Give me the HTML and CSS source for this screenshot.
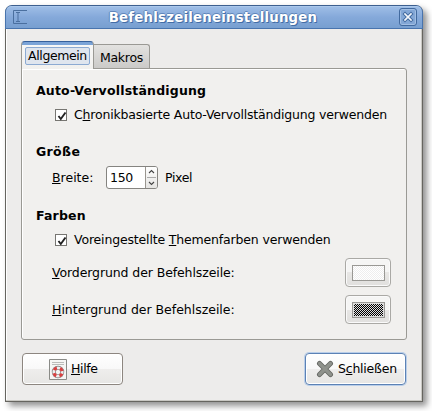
FILE: index.html
```html
<!DOCTYPE html>
<html lang="de">
<head>
<meta charset="utf-8">
<title>Befehlszeileneinstellungen</title>
<link rel="stylesheet" href="styles.css">
</head>
<body>
<div class="window">
  <header class="titlebar">
    <svg class="app-icon" width="14" height="14" viewBox="0 0 14 14" fill="none" stroke="#4a6f9f"><path d="M14 .5H.5v13H14M3 2.500h4M5 3v8M3 11.500h4"/></svg>
    <h1 class="title">Befehlszeileneinstellungen</h1>
    <button class="close" aria-label="Schließen"><svg width="16" height="16" viewBox="0 0 16 16" fill="none"><path d="M5 5l6 6M11 5l-6 6" stroke="#426a9f" stroke-width="3.600" stroke-linecap="square"/><path d="M5 5l6 6M11 5l-6 6" stroke="#f3f7fc" stroke-width="1.700" stroke-linecap="square"/></svg></button>
  </header>
  <nav class="tabs">
    <button class="tab active"><span class="focus">Allgemein</span></button>
    <button class="tab inactive"><span class="makros">Makros</span></button>
  </nav>
  <main class="panel">
    <h2 class="auto">Auto-Vervollständigung</h2>
    <div class="row check"><span class="box"><svg width="12" height="12" viewBox="0 0 12 12"><path d="M2.500 6l2.300 3L9.500 2.500" fill="none" stroke="#222" stroke-width="1.900"/></svg></span><span class="t-chronik">C<u>h</u>ronikbasierte Auto-Vervollständigung verwenden</span></div>
    <h2 class="size">Größe</h2>
    <div class="row width"><span class="label">Breite:</span><span class="spin"><span class="value">150</span><span class="steps"><svg width="11" height="22" viewBox="0 0 11 22" fill="none" stroke="#444"><path d="M3 6L5.500 3.500 8 6M3 15l2.500 2.500L8 15" stroke-width="1.100"/><path d="M1 10.500h9" stroke="#aaa"/></svg></span></span><span class="t-pixel">Pixel</span></div>
    <h2 class="colors">Farben</h2>
    <div class="row check"><span class="box"><svg width="12" height="12" viewBox="0 0 12 12"><path d="M2.500 6l2.300 3L9.500 2.500" fill="none" stroke="#222" stroke-width="1.900"/></svg></span><span class="t-themen">Voreingestellte <u>T</u>hemenfarben verwenden</span></div>
    <div class="row color"><span class="t-vorder"><u>V</u>ordergrund der Befehlszeile:</span><button class="swatch"><span class="chip light"></span></button></div>
    <div class="row color"><span class="t-hinter"><u>H</u>intergrund der Befehlszeile:</span><button class="swatch"><span class="chip dark"></span></button></div>
  </main>
  <footer class="actions">
    <button class="btn help">
      <svg width="18" height="21" viewBox="0 0 18 21" fill="none"><path d="M.5.5h17v20H.5z" fill="#f6f6f4" stroke="#8a8b87"/><path d="M3 3.500h12M3 5.500h12" stroke="#bbbcb9"/><circle cx="9" cy="13" r="4.200" stroke="#777" stroke-width="4"/><circle cx="9" cy="13" r="4.200" stroke="#eee" stroke-width="2.800"/><circle cx="9" cy="13" r="4.200" stroke="#d94040" stroke-width="3" stroke-dasharray="3.300 3.297" stroke-dashoffset="-1.650"/></svg>
      <span class="t-help"><u>H</u>ilfe</span>
    </button>
    <button class="btn done">
      <svg width="18" height="18" viewBox="0 0 18 18" fill="none" stroke-linecap="round"><path d="M3.500 3.500l11 11M14.500 3.500l-11 11" stroke="#656763" stroke-width="5"/><path d="M3.500 3.500l11 11M14.500 3.500l-11 11" stroke="#8f928c" stroke-width="3.200"/></svg>
      <span class="t-done">S<u>c</u>hließen</span>
    </button>
  </footer>
</div>
</body>
</html>
```
FILE: styles.css
```css
* { box-sizing: border-box; }
body { margin: 0; padding: 5px; height: 411px; overflow: hidden; background: #fff; }
body, button { font: 12.5px/16px "DejaVu Sans", sans-serif; color: #000; }
button { margin: 0; padding: 0; }
h1, h2 { margin: 0; }
span { white-space: nowrap; }
u, .label::first-letter { text-decoration: underline 1px; text-underline-offset: 1px; text-decoration-skip-ink: none; }
.window { width: 418px; height: 397px; background: #edeceb; border: 1px solid #666560; border-top-color: #3d5f8f; border-radius: 7px 7px 0 0; box-shadow: inset -1px -1px #c9c8c3, inset 1px 0 #fff, 4px 4px 6px rgba(0,0,0,.43); }
.titlebar { height: 23px; margin: 0 -1px; padding: 0 5px 0 7px; display: flex; align-items: center; border: solid #4874ae; border-width: 0 1px 1px; border-radius: 6px 6px 0 0; background: linear-gradient(#a0bfe7, #85a9da 50%, #779fd0); box-shadow: inset 0 1px #abc8ec; }
.app-icon { flex: none; }
.title { flex: 1; padding-top: 1px; text-align: center; color: #fff; font-size: 13.3px; line-height: 20px; letter-spacing: .23px; text-shadow: 1px 1px #426da6, -1px 0 #6087bb, 0 -1px #6087bb; }
.close { width: 18px; height: 18px; border: 1px solid #426a9f; border-radius: 3px; background: #83a7d6; box-shadow: inset 0 0 0 1px #a1bee3; display: grid; place-items: center; }
.tabs { height: 39px; padding: 12px 0 0 15px; display: flex; align-items: flex-start; }
.tab { border: 1px solid #9a9994; border-bottom: 0; }
.active { width: 73px; height: 28px; padding: 2px 3px 0; z-index: 1; border-top: 1px solid #36609b; border-radius: 4px 4px 0 0; background: linear-gradient(#7ba4d8 3px, #f7f7f6 3px, #f1f0ee); display: flex; align-items: flex-start; }
.focus { display: block; width: 65px; height: 18px; margin-top: 3px; border: 1px solid #8caad2; border-radius: 2px; background: #dfe5ee; line-height: 15px; letter-spacing: -.4px; }
.inactive { width: 57px; height: 24px; margin: 3px 0 0 -1px; padding-top: 2px; border-radius: 0 3px 0 0; background: linear-gradient(#e3e2e0, #cbcac8); letter-spacing: -.25px; }
.panel { width: 386px; height: 272px; margin: 0 15px; padding: 12px 15px 0 14px; background: #f1f0ee; border: 1px solid #9a9994; border-radius: 0 3px 3px 3px; box-shadow: inset 1px 1px #fff; }
.panel h2 { height: 20px; font-size: 12.5px; line-height: 20px; letter-spacing: .19px; }
.panel .size, .panel .colors { margin-top: 13px; }
.panel .size { letter-spacing: .35px; }
.row { display: flex; align-items: center; }
.check { height: 28px; padding-left: 19px; gap: 7px; }
.box { width: 12px; height: 12px; border: 1px solid #777672; background: #fff; display: grid; place-items: center; }
.t-chronik { letter-spacing: -.185px; }
.t-themen { letter-spacing: -.165px; }
.t-vorder { letter-spacing: -.1px; }
.t-hinter { letter-spacing: -.02px; }
.t-pixel { letter-spacing: -.35px; }
.width { height: 31px; padding-left: 16px; }
.label { display: block; width: 54px; }
.spin { display: flex; width: 52px; height: 23px; margin-right: 7px; border: 1px solid #858480; border-radius: 3px; background: #fff; overflow: hidden; }
.value { width: 39px; padding-left: 3px; line-height: 21px; border-right: 1px solid #99958f; letter-spacing: -.3px; }
.steps { width: 11px; background: linear-gradient(#fff, #e5e4e2); }
.color { height: 37px; padding-left: 16px; justify-content: space-between; }
.swatch { width: 46px; height: 29px; border: 1px solid #aaa9a5; border-radius: 4px; background: linear-gradient(#f5f5f4 50%, #e8e7e5 50%, #e1e0de); display: grid; place-items: center; box-shadow: inset 0 0 0 1px #fafafa; }
.chip { width: 33px; height: 16px; border: 1px solid #999894; background: #fff; padding: 1px; }
.light { background: conic-gradient(#eee 25%, #fff 0 50%, #eee 0 75%, #fff 0) 0 0 / 2px 2px; }
.dark { background: conic-gradient(#000 25%, #ddd 0 50%, #000 0 75%, #ddd 0) 0 0 / 2px 2px content-box content-box, #ddd; }
.actions { padding: 13px 16px 0; display: flex; justify-content: space-between; }
.btn { width: 101px; height: 32px; border: 1px solid #8d8680; border-radius: 4px; display: flex; align-items: center; background: linear-gradient(#fff, #f8f8f8 50%, #eeedec 50%, #e7e6e4); box-shadow: inset 0 0 0 1px #fff; }
.help { padding-left: 26px; gap: 4px; letter-spacing: -.35px; }
.done { padding-left: 10px; gap: 4px; letter-spacing: -.22px; border-color: #5c82b5; box-shadow: 0 0 0 1px #b9cee9, inset 0 0 0 1px #fff; }
```
